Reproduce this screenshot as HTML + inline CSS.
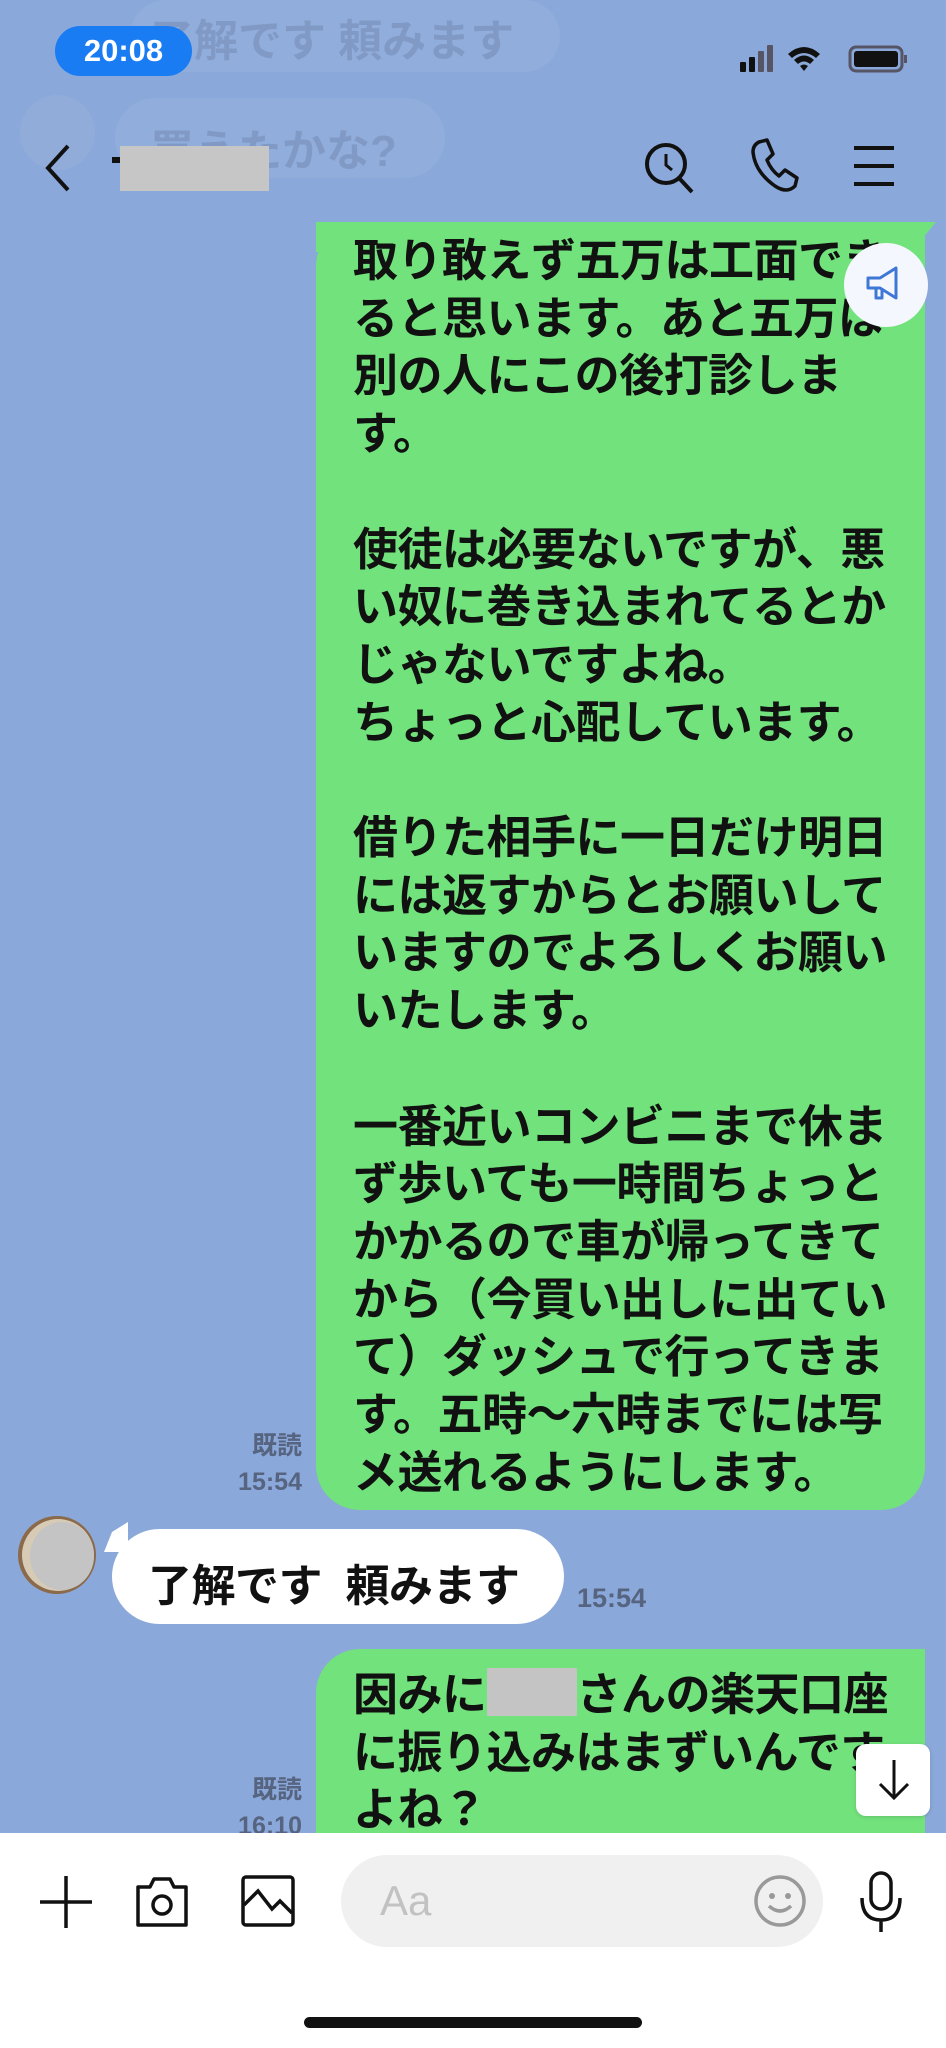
<!DOCTYPE html>
<html><head><meta charset="utf-8"><style>
*{margin:0;padding:0;box-sizing:border-box}
body{width:946px;height:2048px;overflow:hidden;background:#8aa8da;font-family:"Liberation Sans","Noto Sans CJK JP",sans-serif;position:relative}
.abs{position:absolute}
.green{background:#72e27c;border-radius:44px}
.txt{font-weight:bold;font-size:45px;line-height:57.7px;color:#111;white-space:pre;letter-spacing:-0.5px}
.small{color:#566480;font-size:25px;text-align:right;line-height:36px;font-weight:bold}
.ghost{opacity:.13}
</style></head><body>
<!-- ghost background -->
<div class="abs ghost" style="left:130px;top:0;width:430px;height:72px;background:#b8cdef;border-radius:36px"></div>
<div class="abs ghost" style="left:150px;top:5px;font-size:44px;font-weight:bold;color:#223">了解です 頼みます</div>
<div class="abs ghost" style="left:115px;top:98px;width:330px;height:80px;background:#b8cdef;border-radius:40px"></div>
<div class="abs ghost" style="left:150px;top:115px;font-size:44px;font-weight:bold;color:#223">買えたかな?</div>
<div class="abs ghost" style="left:20px;top:95px;width:75px;height:75px;border-radius:50%;background:#ccd"></div>
<!-- status -->
<div class="abs" style="left:55px;top:26px;width:137px;height:50px;background:#1a7cf2;border-radius:25px;color:#fff;font-size:31px;font-weight:bold;text-align:center;line-height:50px">20:08</div>
<svg class="abs" style="left:738px;top:42px" width="200" height="34">
<rect x="2" y="20" width="6" height="10" rx="1" fill="#111"/><rect x="11" y="15" width="6" height="15" rx="1" fill="#111"/><rect x="20" y="9" width="6" height="21" rx="1" fill="#556"/><rect x="29" y="3" width="6" height="27" rx="1" fill="#556"/>
<path d="M50 12 Q66 -2 82 12 L78 16 Q66 6 54 16Z M56 18 Q66 9 76 18 L72 22 Q66 17 60 22Z M62 24 L66 29 L70 24 Q66 21 62 24Z" fill="#111"/>
<rect x="112" y="5" width="52" height="24" rx="6" fill="none" stroke="#556" stroke-width="3"/><rect x="116" y="9" width="44" height="16" rx="3" fill="#111"/><rect x="166" y="13" width="3" height="8" fill="#556"/>
</svg>
<!-- header -->
<svg class="abs" style="left:38px;top:140px" width="40" height="56"><path d="M30 6 L10 28 L30 50" fill="none" stroke="#111" stroke-width="4"/></svg>
<div class="abs" style="left:112px;top:157px;width:10px;height:6px;background:#111"></div>
<div class="abs" style="left:120px;top:146px;width:149px;height:45px;background:#c6c6c6"></div>
<svg class="abs" style="left:640px;top:138px" width="60" height="60"><circle cx="26" cy="26" r="19" fill="none" stroke="#111" stroke-width="4"/><path d="M39 40 L52 54" stroke="#111" stroke-width="4"/><path d="M26 16 V27 L32 32" fill="none" stroke="#111" stroke-width="3"/></svg>
<svg class="abs" style="left:745px;top:136px" width="60" height="60"><path d="M14 6 L22 4 L28 18 L22 24 Q26 34 34 40 L40 34 L52 42 L50 50 Q42 58 30 50 Q10 36 8 16 Q8 9 14 6Z" fill="none" stroke="#111" stroke-width="3.5" stroke-linejoin="round"/></svg>
<svg class="abs" style="left:852px;top:144px" width="46" height="46"><path d="M2 4H42M2 22H42M2 40H42" stroke="#111" stroke-width="4"/></svg>
<!-- bubble 1 -->
<div class="abs green" style="left:316px;top:222px;width:609px;height:1288px;border-top-right-radius:0"></div>
<div class="abs green" style="left:316px;top:222px;width:620px;height:30px;border-radius:0;clip-path:polygon(0 0,100% 0,96% 100%,0 100%)"></div>
<div class="abs txt" style="left:353px;top:232px">取り敢えず五万は工面でき
ると思います。あと五万は
別の人にこの後打診しま
す。

使徒は必要ないですが、悪
い奴に巻き込まれてるとか
じゃないですよね。
ちょっと心配しています。

借りた相手に一日だけ明日
には返すからとお願いして
いますのでよろしくお願い
いたします。

一番近いコンビニまで休ま
ず歩いても一時間ちょっと
かかるので車が帰ってきて
から（今買い出しに出てい
て）ダッシュで行ってきま
す。五時〜六時までには写
メ送れるようにします。</div>
<div class="abs" style="left:844px;top:243px;width:84px;height:84px;border-radius:50%;background:#f4f7fd"></div>
<svg class="abs" style="left:862px;top:262px" width="50" height="46"><path d="M6 16 H18 L34 6 V36 L18 26 H6Z M14 26 V36 H20 V28" fill="none" stroke="#3f77d6" stroke-width="3" stroke-linejoin="round"/></svg>
<div class="abs small" style="left:200px;top:1428px;width:102px">既読<br>15:54</div>
<!-- incoming -->
<div class="abs" style="left:18px;top:1516px;width:78px;height:78px;border-radius:50%;background:#8a6a4a"></div>
<div class="abs" style="left:22px;top:1519px;width:72px;height:72px;border-radius:50%;background:#d8cbb5"></div>
<div class="abs" style="left:30px;top:1522px;width:64px;height:68px;border-radius:50%;background:#c4c4c4"></div>
<div class="abs" style="left:104px;top:1522px;width:0;height:0;border-left:8px solid transparent;border-right:16px solid #fff;border-top:10px solid transparent;border-bottom:20px solid #fff"></div>
<div class="abs" style="left:112px;top:1529px;width:452px;height:95px;border-radius:48px;background:#fff"></div>
<div class="abs" style="left:148px;top:1550px;font-size:44px;font-weight:bold;color:#111;white-space:pre;letter-spacing:-0.5px">了解です  頼みます</div>
<div class="abs small" style="left:577px;top:1580px;font-size:27px;text-align:left">15:54</div>
<!-- bubble 2 -->
<div class="abs green" style="left:316px;top:1649px;width:609px;height:260px;border-top-right-radius:0"></div>
<div class="abs txt" style="left:353px;top:1666px">因みに<span style="display:inline-block;width:90px;height:48px;background:#c4c4c4;vertical-align:-6px"></span>さんの楽天口座
に振り込みはまずいんです
よね？</div>
<div class="abs small" style="left:200px;top:1772px;width:102px">既読<br>16:10</div>
<div class="abs" style="left:856px;top:1744px;width:74px;height:72px;background:#fff;border-radius:10px;box-shadow:0 1px 4px rgba(0,0,0,.15)"></div>
<svg class="abs" style="left:874px;top:1756px" width="40" height="48"><path d="M20 4V42M6 28L20 42L34 28" fill="none" stroke="#111" stroke-width="3"/></svg>
<!-- bottom bar -->
<div class="abs" style="left:0;top:1833px;width:946px;height:215px;background:#fff"></div>
<svg class="abs" style="left:36px;top:1872px" width="60" height="60"><path d="M30 4V56M4 30H56" stroke="#111" stroke-width="3.5"/></svg>
<svg class="abs" style="left:134px;top:1873px" width="56" height="56"><path d="M4 14H16L20 6H36L40 14H52V52H4Z" fill="none" stroke="#111" stroke-width="3.5" stroke-linejoin="round"/><circle cx="28" cy="32" r="9" fill="none" stroke="#111" stroke-width="3.5"/></svg>
<svg class="abs" style="left:240px;top:1873px" width="56" height="56"><rect x="3" y="4" width="50" height="48" rx="3" fill="none" stroke="#111" stroke-width="3.5"/><path d="M4 32L18 18L32 36L40 28L52 40" fill="none" stroke="#111" stroke-width="3.5"/></svg>
<div class="abs" style="left:341px;top:1855px;width:482px;height:92px;border-radius:46px;background:#f0f0f0"></div>
<div class="abs" style="left:380px;top:1877px;font-size:42px;color:#c2c2c2">Aa</div>
<svg class="abs" style="left:752px;top:1873px" width="56" height="56"><circle cx="28" cy="28" r="24" fill="none" stroke="#999" stroke-width="3.5"/><circle cx="20" cy="23" r="3" fill="#999"/><circle cx="36" cy="23" r="3" fill="#999"/><path d="M17 33Q28 43 39 33" fill="none" stroke="#999" stroke-width="3.5"/></svg>
<svg class="abs" style="left:856px;top:1870px" width="50" height="64"><rect x="15" y="3" width="20" height="36" rx="10" fill="none" stroke="#111" stroke-width="3.5"/><path d="M6 28Q6 50 25 50Q44 50 44 28M25 50V62" fill="none" stroke="#111" stroke-width="3.5"/></svg>
<div class="abs" style="left:304px;top:2017px;width:338px;height:11px;border-radius:6px;background:#111"></div>
</body></html>
